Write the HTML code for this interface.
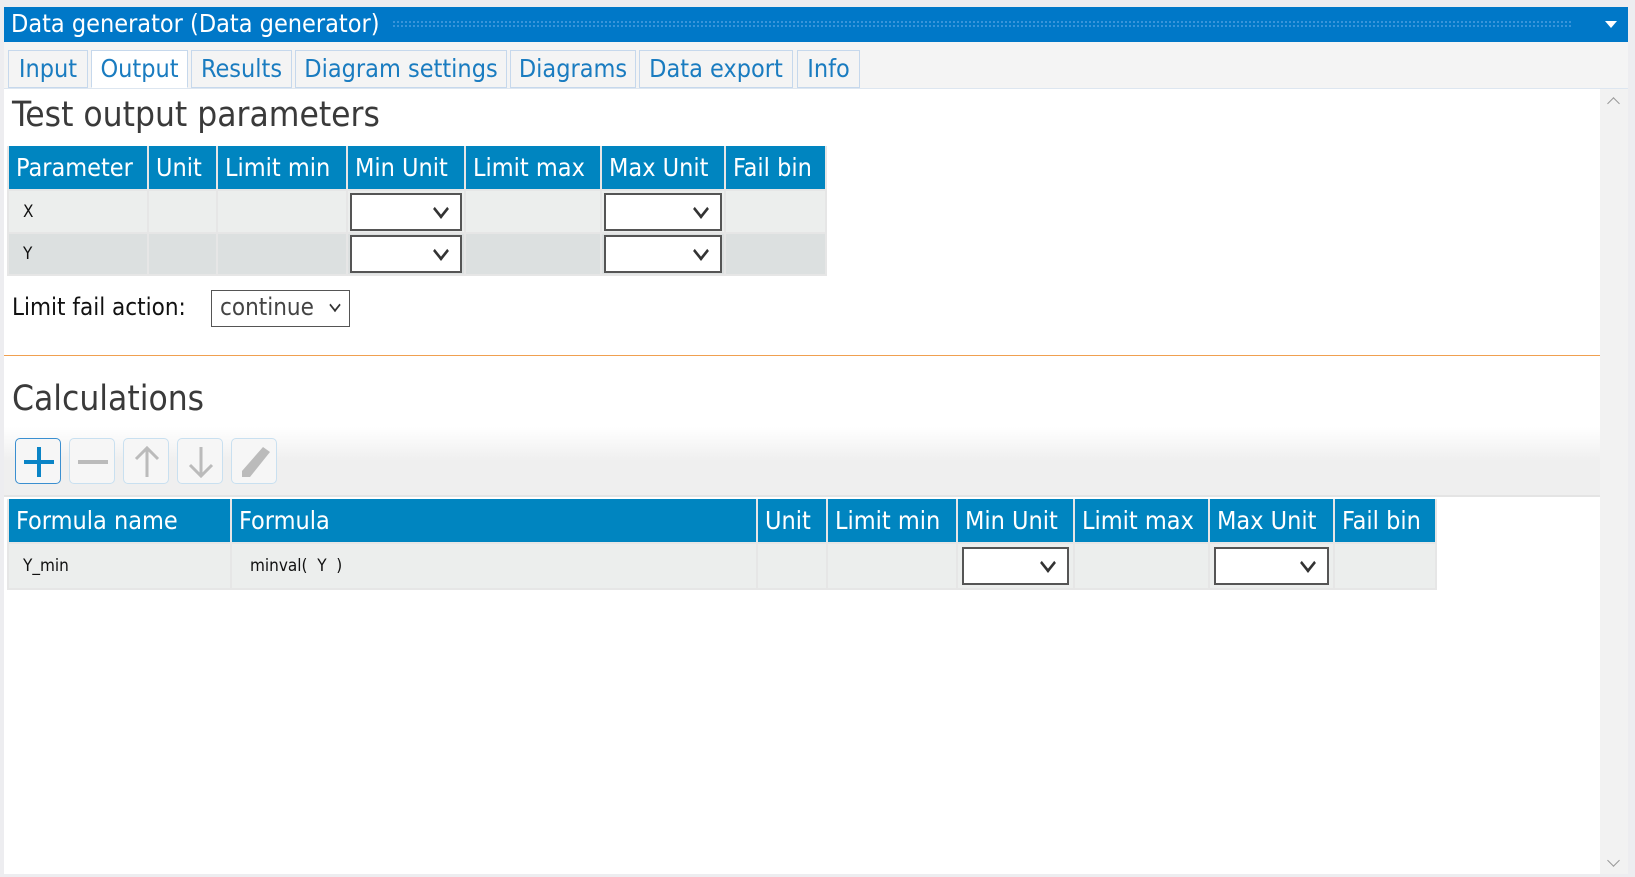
<!DOCTYPE html>
<html><head><meta charset="utf-8"><style>
*{box-sizing:border-box;margin:0;padding:0}
body{width:1635px;height:877px;background:#ededf0;font-family:"DejaVu Sans Condensed","DejaVu Sans","Liberation Sans",sans-serif;position:relative;overflow:hidden}
.a{position:absolute}
.title{left:4px;top:7px;width:1624px;height:35px;background:#0078c8;color:#fff;font-size:25px;line-height:34px;padding-left:7px}
.dots{left:392px;top:20px;width:1180px;height:8px;background-image:radial-gradient(#4a9ee0 1px,transparent 1px);background-size:4px 4px}
.tabbar{left:4px;top:42px;width:1624px;height:47px;background:#f4f4f4;border-bottom:1px solid #dde6f0}
.tab{top:50px;height:38px;border:1px solid #c6d8ec;background:#f4f4f4;color:#1a7cc0;font-size:25px;line-height:36px;text-align:center}
.content{left:4px;top:89px;width:1596px;height:785px;background:#fff}
.scroll{left:1600px;top:89px;width:28px;height:785px;background:#f2f2f2}
h1{position:absolute;font-weight:normal;color:#3a3a3a;font-size:35px}
table{position:absolute;border-collapse:collapse;font-size:25px}
th{background:#0085c0;color:#fff;font-weight:normal;text-align:left;padding-left:7px;border:2px solid #e6e6e6;border-top:none;white-space:nowrap}
td{border:2px solid #e6e6e6;font-size:17px;padding-left:14px;color:#111}
td.s{padding:0 2px}
.sel{display:block;width:100%;height:38px;background:#fff;border:2px solid #555;position:relative}
.sel::after{content:"";position:absolute;right:12px;top:7px;width:11px;height:11px;border-right:3px solid #333;border-bottom:3px solid #333;transform:scaleX(.8) rotate(45deg)}
.btn{top:438px;width:46px;height:46px;border:1px solid #c9e0f0;border-radius:5px;background:#f6f6f6}
</style></head><body>
<div class="a title">Data generator (Data generator)</div>
<div class="a dots"></div>
<div class="a" style="left:1605px;top:21px;width:0;height:0;border-left:6px solid transparent;border-right:6px solid transparent;border-top:7px solid #fff"></div>
<div class="a tabbar"></div>
<div class="a tab" style="left:8px;width:80px">Input</div>
<div class="a tab" style="left:91px;width:97px;background:#fff;border-bottom-color:#fff">Output</div>
<div class="a tab" style="left:191px;width:101px">Results</div>
<div class="a tab" style="left:295px;width:212px">Diagram settings</div>
<div class="a tab" style="left:510px;width:126px">Diagrams</div>
<div class="a tab" style="left:639px;width:154px">Data export</div>
<div class="a tab" style="left:797px;width:63px">Info</div>
<div class="a content"></div>
<div class="a scroll"></div>
<div class="a" style="left:1609px;top:99px;width:9px;height:9px;border-left:1.5px solid #999;border-top:1.5px solid #999;transform:rotate(45deg)"></div>
<div class="a" style="left:1609px;top:856px;width:9px;height:9px;border-right:1.5px solid #999;border-bottom:1.5px solid #999;transform:rotate(45deg)"></div>
<h1 style="left:12px;top:95px">Test output parameters</h1>
<table style="left:7px;top:146px;width:820px">
<tr style="height:44px"><th style="width:140px">Parameter</th><th style="width:69px">Unit</th><th style="width:130px">Limit min</th><th style="width:118px">Min Unit</th><th style="width:136px">Limit max</th><th style="width:124px">Max Unit</th><th>Fail bin</th></tr>
<tr style="height:43px;background:#eceeed"><td>X</td><td></td><td></td><td class="s"><span class="sel"></span></td><td></td><td class="s"><span class="sel"></span></td><td></td></tr>
<tr style="height:42px;background:#dce0e0"><td>Y</td><td></td><td></td><td class="s"><span class="sel"></span></td><td></td><td class="s"><span class="sel"></span></td><td></td></tr>
</table>
<div class="a" style="left:12px;top:293px;font-size:24px;color:#111">Limit fail action:</div>
<div class="a" style="left:211px;top:290px;width:139px;height:37px;border:1.5px solid #555;font-size:24px;color:#444;padding:2px 0 0 8px">continue</div>
<div class="a" style="left:330px;top:300px;width:10px;height:10px;border-right:2.5px solid #333;border-bottom:2.5px solid #333;transform:scaleX(.8) rotate(45deg)"></div>
<div class="a" style="left:4px;top:355px;width:1596px;height:1px;background:#f0a050"></div>
<h1 style="left:12px;top:379px">Calculations</h1>
<div class="a" style="left:4px;top:427px;width:1596px;height:70px;background:linear-gradient(#fff,#efefef 50%,#efefef);border-bottom:2px solid #e4e4e4"></div>
<div class="a btn" style="left:15px;border-color:#3a8fd0"><svg width="46" height="46"><path d="M23 8V38M8 23H38" stroke="#0a84c6" stroke-width="4"/></svg></div>
<div class="a btn" style="left:69px"><svg width="46" height="46"><path d="M8 23H38" stroke="#bbb" stroke-width="4"/></svg></div>
<div class="a btn" style="left:123px"><svg width="46" height="46"><path d="M23 38V9M12 20L23 9L34 20" stroke="#bbb" stroke-width="3" fill="none"/></svg></div>
<div class="a btn" style="left:177px"><svg width="46" height="46"><path d="M23 8V37M12 26L23 37L34 26" stroke="#bbb" stroke-width="3" fill="none"/></svg></div>
<div class="a btn" style="left:231px"><svg width="46" height="46"><path d="M31 8L38 13L18 38L10 38L10 32Z" fill="#bbb"/></svg></div>
<table style="left:7px;top:499px;width:1430px">
<tr style="height:44px"><th style="width:223px">Formula name</th><th style="width:526px">Formula</th><th style="width:70px">Unit</th><th style="width:130px">Limit min</th><th style="width:117px">Min Unit</th><th style="width:135px">Limit max</th><th style="width:125px">Max Unit</th><th>Fail bin</th></tr>
<tr style="height:46px;background:#eceeed"><td>Y_min</td><td style="padding-left:18px">minval(&nbsp; Y&nbsp; )</td><td></td><td></td><td class="s" style="padding:0 4px"><span class="sel"></span></td><td></td><td class="s" style="padding:0 4px"><span class="sel"></span></td><td></td></tr>
</table>
</body></html>
